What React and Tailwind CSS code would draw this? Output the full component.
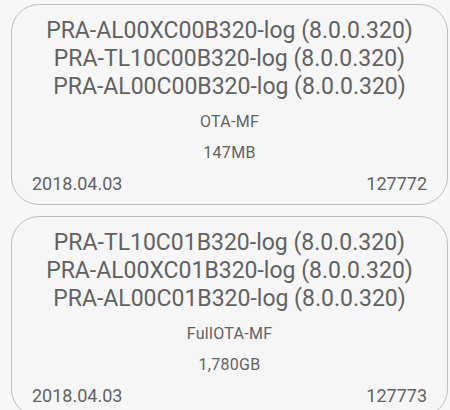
export default function App() {
  const cards = [
    {
      titles: [
        "PRA-AL00XC00B320-log (8.0.0.320)",
        "PRA-TL10C00B320-log (8.0.0.320)",
        "PRA-AL00C00B320-log (8.0.0.320)",
      ],
      type: "OTA-MF",
      size: "147MB",
      date: "2018.04.03",
      id: "127772",
    },
    {
      titles: [
        "PRA-TL10C01B320-log (8.0.0.320)",
        "PRA-AL00XC01B320-log (8.0.0.320)",
        "PRA-AL00C01B320-log (8.0.0.320)",
      ],
      type: "FullOTA-MF",
      size: "1,780GB",
      date: "2018.04.03",
      id: "127773",
    },
  ];
  return (
    <div
      className="w-[450px] h-[410px] overflow-hidden bg-[#f7f7f7] pt-[4px] pl-[11px] flex flex-col gap-[11px]"
      style={{ fontFamily: "Roboto, 'Liberation Sans', sans-serif" }}
    >
      {cards.map((c, i) => (
        <div
          key={i}
          className="w-[437px] h-[201px] shrink-0 rounded-[28px] border border-[#bdbdbd] bg-[#f6f6f6] flex flex-col pt-[12px] px-[20px] text-[#626262]"
        >
          <div className="flex flex-col items-center text-[23px] leading-[28px] whitespace-nowrap">
            {c.titles.map((t) => (
              <div key={t}>{t}</div>
            ))}
          </div>
          <div className="mt-[12px] text-center text-[16px] leading-[18px] tracking-[0.3px]">{c.type}</div>
          <div className="mt-[13px] text-center text-[16px] leading-[18px] tracking-[0.3px]">{c.size}</div>
          <div className="mt-[11px] flex justify-between text-[18px] leading-[22px]">
            <span>{c.date}</span>
            <span>{c.id}</span>
          </div>
        </div>
      ))}
    </div>
  );
}
